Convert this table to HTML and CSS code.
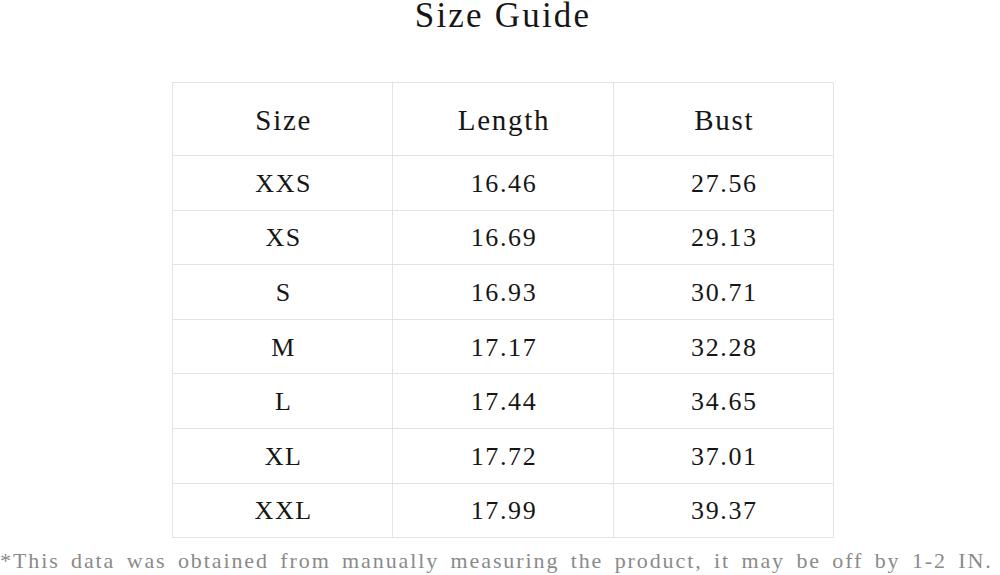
FILE: index.html
```html
<!DOCTYPE html>
<html>
<head>
<meta charset="utf-8">
<link rel="stylesheet" href="styles.css">
</head>
<body>
<div class="page">
  <h1 class="title">Size Guide</h1>
  <table class="guide">
    <thead>
      <tr><th>Size</th><th>Length</th><th>Bust</th></tr>
    </thead>
    <tbody>
      <tr><td>XXS</td><td>16.46</td><td>27.56</td></tr>
      <tr><td>XS</td><td>16.69</td><td>29.13</td></tr>
      <tr><td>S</td><td>16.93</td><td>30.71</td></tr>
      <tr><td>M</td><td>17.17</td><td>32.28</td></tr>
      <tr><td>L</td><td>17.44</td><td>34.65</td></tr>
      <tr><td>XL</td><td>17.72</td><td>37.01</td></tr>
      <tr><td>XXL</td><td>17.99</td><td>39.37</td></tr>
    </tbody>
  </table>
  <p class="note">*This data was obtained from manually measuring the product, it may be off by 1-2 IN.</p>
</div>
</body>
</html>
```
FILE: styles.css
```css
html, body {
  margin: 0;
  padding: 0;
  background: #fff;
}
.page {
  width: 1000px;
  height: 575px;
  overflow: hidden;
  font-family: "Liberation Serif", "DejaVu Serif", serif;
  color: #161616;
}
.title {
  margin: 0;
  height: 82px;
  font-weight: normal;
  font-size: 35px;
  letter-spacing: 2.2px;
  line-height: 30px;
  padding-top: 1px;
  padding-left: 6px;
  text-align: center;
  box-sizing: border-box;
}
.guide {
  margin-left: 172px;
  border-collapse: collapse;
  table-layout: fixed;
  width: 662px;
}
.guide th, .guide td {
  border: 1px solid #e3e3e3;
  text-align: center;
  padding: 0;
  font-weight: normal;
}
.guide th {
  height: 70px;
  padding-top: 2px;
  padding-left: 2px;
  font-size: 29px;
  letter-spacing: 1.7px;
}
.guide td {
  height: 51.6px;
  padding-top: 2px;
  padding-left: 2px;
  font-size: 26px;
  letter-spacing: 1.6px;
}
.note {
  margin: 10px 0 0 0;
  font-size: 22px;
  letter-spacing: 1.9px;
  word-spacing: 4px;
  line-height: 26px;
  color: #8a8a8a;
  white-space: nowrap;
}
```
